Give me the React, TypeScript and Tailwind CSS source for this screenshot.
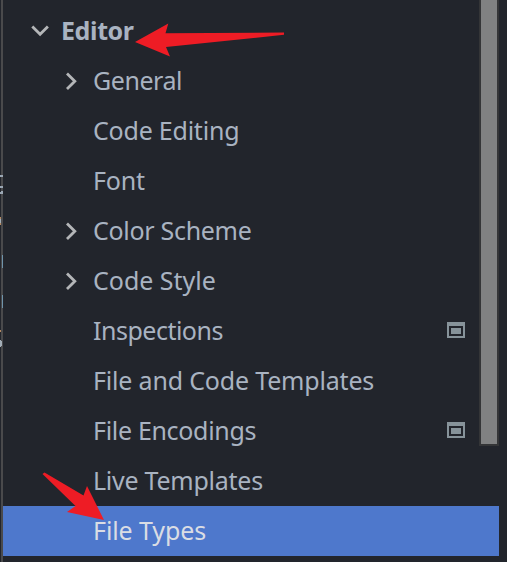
import React from "react";

type Item = { label: string; tracking: string; arrow?: boolean; project?: boolean; selected?: boolean };

const items: Item[] = [
  { label: "General", tracking: "tracking-[-0.45px]", arrow: true },
  { label: "Code Editing", tracking: "tracking-[-0.22px]" },
  { label: "Font", tracking: "tracking-[-0.15px]" },
  { label: "Color Scheme", tracking: "tracking-[-0.3px]", arrow: true },
  { label: "Code Style", tracking: "tracking-[-0.02px]", arrow: true },
  { label: "Inspections", tracking: "tracking-[-0.5px]", project: true },
  { label: "File and Code Templates", tracking: "tracking-[-0.18px]" },
  { label: "File Encodings", tracking: "tracking-[-0.32px]", project: true },
  { label: "Live Templates", tracking: "tracking-[-0.25px]" },
  { label: "File Types", tracking: "tracking-[-0.1px]", selected: true },
];

function ChevronRight() {
  return (
    <svg width="12" height="20" viewBox="0 0 12 20" fill="none" stroke="#b4b6b8" strokeWidth="2.8">
      <path d="M2 2.4 L9.8 10.2 L2 18" />
    </svg>
  );
}

function ChevronDown() {
  return (
    <svg width="20" height="12" viewBox="0 0 20 12" fill="none" stroke="#b4b6b8" strokeWidth="2.8">
      <path d="M1.3 1.4 L9.1 9.2 L16.9 1.4" />
    </svg>
  );
}

function ProjectBadge() {
  return (
    <svg width="18" height="16" viewBox="0 0 18 16" shapeRendering="crispEdges">
      <path fill="#87939a" fillRule="evenodd" d="M0 0H18V16H0Z M2 4V14H16V4Z M4 6H14V12H4Z" />
    </svg>
  );
}

/* Slivers of the editor text that sit behind the dialog's left edge. */
function EditorEdge() {
  return (
    <svg className="absolute top-0 left-0" width="3" height="562" viewBox="0 0 3 562" shapeRendering="crispEdges">
      <path fill="#9ba7b4" d="M0 175H3V177H0Z M0 186H3V188H0Z M1 191H3V192H1Z M0 192H3V194H0Z" />
      <path fill="#b58a62" d="M0 217H1V225H0Z M0 330H1V332H0Z" />
      <path fill="#a3aeb8" d="M0 219H1V223H0Z M0 340H1V347H0Z M1 341H2V346H1Z" />
      <path fill="#6f93aa" d="M2 255H3V268H2Z M2 295H3V308H2Z" />
    </svg>
  );
}

export default function App() {
  return (
    <div className="relative flex h-[562px] w-[507px] overflow-hidden bg-[#22252c] font-['Noto_Sans','Segoe_UI',sans-serif] text-[25px] text-[#a9b3c1]">
      <div className="ml-px w-0.5 shrink-0 bg-[#4a4a4c]" />
      <div className="flex w-[496px] shrink-0 flex-col pt-1.5">
        <div className="flex h-[50px] shrink-0 items-center">
          <div className="flex w-[58px] pl-7">
            <ChevronDown />
          </div>
          <span className="pb-0.5 font-bold leading-[48px] whitespace-nowrap tracking-[-0.38px]">Editor</span>
        </div>
        {items.map((item) => (
          <div
            key={item.label}
            className={`flex h-[50px] shrink-0 items-center ${item.selected ? "bg-[#4e78cc] text-[#dadde4]" : ""}`}
          >
            <div className="flex w-[90px] shrink-0 pl-[62px]">{item.arrow && <ChevronRight />}</div>
            <span className={`pb-0.5 leading-[48px] whitespace-nowrap ${item.tracking}`}>{item.label}</span>
            {item.project && (
              <div className="mr-[34px] mb-0.5 ml-auto">
                <ProjectBadge />
              </div>
            )}
          </div>
        ))}
      </div>
      <div className="absolute top-0 left-[479px] h-[446px] w-5 border-x-2 border-b-2 border-[#343537] bg-[#808182]" />
      <EditorEdge />
      <svg className="absolute inset-0" width="507" height="562" viewBox="0 0 507 562" fill="#ee1c25">
        <path d="M135 42 L168.3 23.5 L165.5 33.2 L284 32.5 L284 34.8 L166 47 L170 56.5 Z" />
        <path d="M104 520 L67 512 L75.5 506 L42.5 474 L44.5 472.5 L83.5 495.5 L87 486 Z" />
      </svg>
    </div>
  );
}
